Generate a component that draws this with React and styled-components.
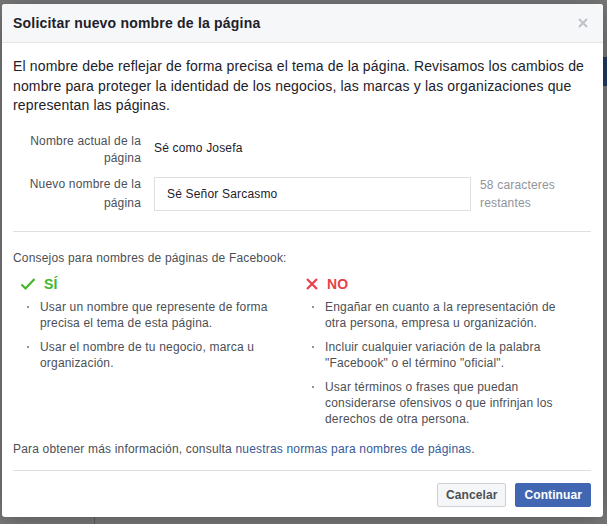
import React from "react";
import styled, { createGlobalStyle } from "styled-components";

const GlobalStyle = createGlobalStyle`
  html, body {
    margin: 0;
    padding: 0;
    background: #7a7a7a;
    font-family: "Liberation Sans", Arial, Helvetica, sans-serif;
  }
`;

const Page = styled.div`
  position: relative;
  width: 607px;
  height: 524px;
  overflow: hidden;
  background: #7a7a7a;
`;

const BackdropBar = styled.div`
  position: absolute;
  left: 603px;
  top: 57px;
  width: 10px;
  height: 29px;
  background: #233a63;
`;

const BackdropLine = styled.div`
  position: absolute;
  left: 94px;
  top: 516px;
  width: 1px;
  height: 10px;
  background: #5e5e5e;
`;

const Modal = styled.div`
  position: absolute;
  left: 2px;
  top: 4px;
  width: 601px;
  background: #fff;
  border-radius: 3px;
  box-shadow: 0 2px 26px rgba(0, 0, 0, 0.3);
  overflow: hidden;
  letter-spacing: 0.18px;
`;

const Header = styled.div`
  height: 39px;
  display: flex;
  align-items: center;
  justify-content: space-between;
  padding: 0 15px 0 11px;
  background: #f6f7f9;
  border-bottom: 1px solid #e5e5e5;
  box-sizing: border-box;
`;

const Title = styled.h2`
  margin: 0;
  font-size: 14px;
  font-weight: bold;
  letter-spacing: 0.2px;
  color: #1d2129;
`;

const Close = styled.span`
  display: flex;
`;

const Body = styled.div`
  padding: 14px 11px 10px 11px;
`;

const Intro = styled.p`
  margin: 0;
  font-size: 14px;
  line-height: 19.5px;
  letter-spacing: 0.15px;
  color: #1d2129;
`;

const FormRow = styled.div`
  display: flex;
  align-items: ${(p) => (p.$center ? "center" : "flex-start")};
  margin-top: ${(p) => p.$top}px;
`;

const Label = styled.div`
  width: 141px;
  flex-shrink: 0;
  padding-right: 13px;
  box-sizing: border-box;
  text-align: right;
  font-size: 12px;
  line-height: ${(p) => p.$lh}px;
  color: #4b4f56;
`;

const Value = styled.div`
  font-size: 12px;
  color: #1d2129;
  padding-top: 8px;
`;

const Input = styled.div`
  width: 317px;
  height: 34px;
  flex-shrink: 0;
  box-sizing: border-box;
  border: 1px solid #dddfe2;
  padding: 0 12px;
  display: flex;
  align-items: center;
  font-size: 12px;
  color: #1d2129;
`;

const Counter = styled.div`
  margin-left: 9px;
  align-self: flex-start;
  margin-top: 1px;
  font-size: 12px;
  line-height: 18px;
  color: #90949c;
`;

const Divider = styled.hr`
  margin: ${(p) => p.$m};
  border: none;
  border-top: 1px solid #dddfe2;
  width: 578px;
`;

const Tips = styled.div`
  margin-top: 18px;
  font-size: 12px;
  line-height: 16px;
  color: #4b4f56;
`;

const Columns = styled.div`
  display: grid;
  grid-template-columns: 285px 1fr;
  margin-top: 9px;
  padding-left: 7px;
`;

const ColHead = styled.div`
  display: flex;
  align-items: center;
  gap: 8px;
  height: 18px;
  font-size: 14px;
  font-weight: bold;
  color: ${(p) => p.$color};
`;

const List = styled.ul`
  list-style: none;
  margin: 6px 0 0;
  padding: 0 0 0 20px;
`;

const Item = styled.li`
  position: relative;
  font-size: 12px;
  line-height: 16px;
  color: #4b4f56;
  margin-bottom: 8px;
  width: 248px;

  &::before {
    content: "";
    position: absolute;
    left: -13px;
    top: 7px;
    width: 2px;
    height: 2px;
    background: #8d949e;
  }
`;

const Footer = styled.p`
  margin: 6px 0 0;
  font-size: 12px;
  line-height: 16px;
  color: #4b4f56;
`;

const Link = styled.a`
  color: #365899;
  text-decoration: none;
`;

const Actions = styled.div`
  display: flex;
  justify-content: flex-end;
  gap: 9px;
  padding-right: 1px;
`;

const Button = styled.button`
  height: 24px;
  padding: 0 8px;
  border-radius: 2px;
  font-family: inherit;
  font-size: 12px;
  font-weight: bold;
  letter-spacing: 0.1px;
  border: 1px solid ${(p) => (p.$primary ? "#4267b2" : "#ccd0d5")};
  background: ${(p) => (p.$primary ? "#4267b2" : "#f5f6f7")};
  color: ${(p) => (p.$primary ? "#fff" : "#4b4f56")};
`;

const CheckIcon = () => (
  <svg width="16" height="14" viewBox="0 0 16 14">
    <polyline points="1.5,7.5 5.5,11.5 14.5,2" fill="none" stroke="#42b72a" strokeWidth="2.2" />
  </svg>
);

const CrossIcon = () => (
  <svg width="14" height="14" viewBox="0 0 14 14">
    <path d="M2 2 L12 12 M12 2 L2 12" stroke="#e9404a" strokeWidth="2.2" fill="none" />
  </svg>
);

const CloseIcon = () => (
  <svg width="10" height="10" viewBox="0 0 10 10">
    <path d="M1 1 L9 9 M9 1 L1 9" stroke="#bec2c9" strokeWidth="2" fill="none" />
  </svg>
);

const yes = [
  "Usar un nombre que represente de forma precisa el tema de esta página.",
  "Usar el nombre de tu negocio, marca u organización.",
];

const no = [
  "Engañar en cuanto a la representación de otra persona, empresa u organización.",
  'Incluir cualquier variación de la palabra "Facebook" o el término "oficial".',
  "Usar términos o frases que puedan considerarse ofensivos o que infrinjan los derechos de otra persona.",
];

export default function App() {
  return (
    <Page>
      <GlobalStyle />
      <BackdropBar />
      <BackdropLine />
      <Modal>
        <Header>
          <Title>Solicitar nuevo nombre de la página</Title>
          <Close>
            <CloseIcon />
          </Close>
        </Header>
        <Body>
          <Intro>
            El nombre debe reflejar de forma precisa el tema de la página. Revisamos los cambios de
            nombre para proteger la identidad de los negocios, las marcas y las organizaciones que
            representan las páginas.
          </Intro>

          <FormRow $top={17}>
            <Label $lh={17}>
              Nombre actual de la
              <br />
              página
            </Label>
            <Value>Sé como Josefa</Value>
          </FormRow>

          <FormRow $top={8} $center>
            <Label $lh={19}>
              Nuevo nombre de la
              <br />
              página
            </Label>
            <Input>Sé Señor Sarcasmo</Input>
            <Counter>
              58 caracteres
              <br />
              restantes
            </Counter>
          </FormRow>

          <Divider $m="18px 0 0 0" />

          <Tips>Consejos para nombres de páginas de Facebook:</Tips>

          <Columns>
            <div>
              <ColHead $color="#42b72a">
                <CheckIcon />
                SÍ
              </ColHead>
              <List>
                {yes.map((t) => (
                  <Item key={t}>{t}</Item>
                ))}
              </List>
            </div>
            <div>
              <ColHead $color="#e9404a">
                <CrossIcon />
                NO
              </ColHead>
              <List>
                {no.map((t) => (
                  <Item key={t}>{t}</Item>
                ))}
              </List>
            </div>
          </Columns>

          <Footer>
            Para obtener más información, consulta{" "}
            <Link href="#">nuestras normas para nombres de páginas</Link>.
          </Footer>

          <Divider $m="13px 0 12px 0" />

          <Actions>
            <Button>Cancelar</Button>
            <Button $primary>Continuar</Button>
          </Actions>
        </Body>
      </Modal>
    </Page>
  );
}
